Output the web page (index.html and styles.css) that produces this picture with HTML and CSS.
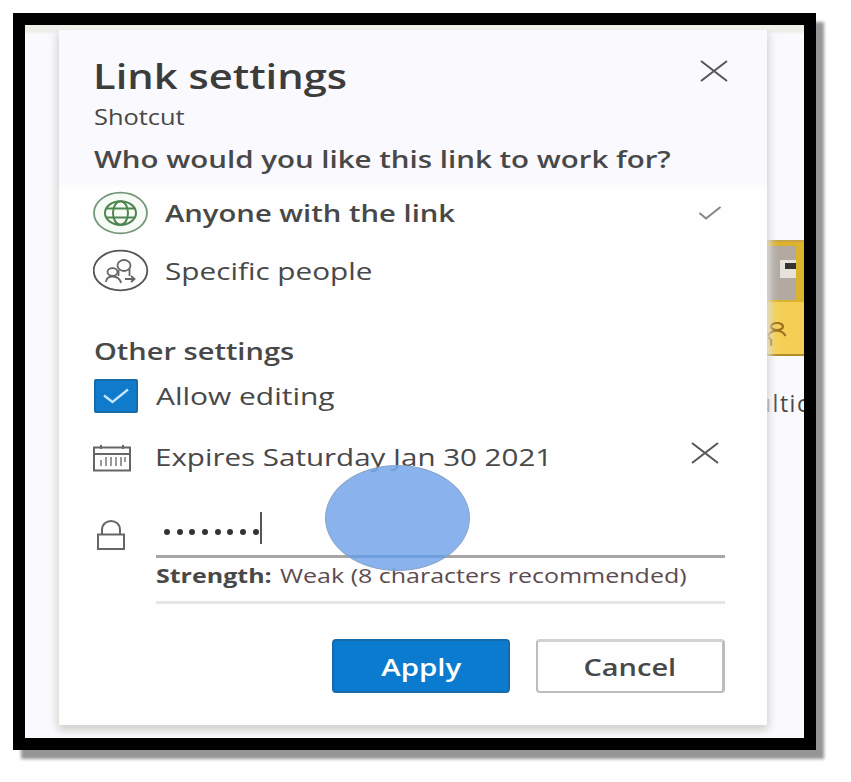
FILE: index.html
```html
<!DOCTYPE html>
<html lang="en">
<head>
<meta charset="utf-8">
<title>Link settings</title>
<link rel="stylesheet" href="styles.css">
</head>
<body>
<main class="frame">
  <aside class="backdrop">
    <div class="tile">
      <div class="tile-photo"><i></i></div>
      <svg class="tile-person" width="20" height="28" viewBox="0 0 20 28" fill="none" stroke="#9b6f1b" stroke-width="2.2"><ellipse cx="10" cy="4.500" rx="6" ry="3.500"/><path d="M1 14C4 7 15 7 18.500 14M1 15l3 3v6"/></svg>
    </div>
    <span class="tile-name">ultic</span>
  </aside>
  <section class="dialog">
    <header class="row title-row">
      <h1 class="t title">Link settings</h1>
      <svg class="close" width="30" height="24" viewBox="0 0 30 24"><path d="M2 2L28 22M28 2L2 22"/></svg>
    </header>
    <div class="row sub-row"><span class="t sub">Shotcut</span></div>
    <div class="row who-row"><span class="t who">Who would you like this link to work for?</span></div>
    <div class="row option">
      <svg class="round" width="56" height="44" viewBox="0 0 56 44" fill="none"><ellipse cx="27.500" cy="22" rx="26.500" ry="20.300" stroke="#74967a" stroke-width="1.800" fill="#f6fcf5"/><g stroke="#4f8550" stroke-width="2"><ellipse cx="27.500" cy="22" rx="15.500" ry="11.800"/><ellipse cx="27.500" cy="22" rx="7.500" ry="11.800"/><path d="M13.500 17.500H41.500M13.500 26.500H41.500"/></g></svg>
      <span class="t anyone">Anyone with the link</span>
      <svg class="tick" width="24" height="16" viewBox="0 0 24 16" fill="none" stroke="#858585" stroke-width="2"><path d="M1.500 8L8 13.500L22.500 2"/></svg>
    </div>
    <div class="row option">
      <svg class="round" width="56" height="44" viewBox="0 0 56 44" fill="none" stroke="#555"><ellipse cx="27.500" cy="21.500" rx="26.800" ry="19.800" stroke-width="1.800"/><g stroke-width="1.800" stroke="#666"><ellipse cx="19.500" cy="23" rx="5" ry="3.800"/><path d="M13 33C13 25.500 26 25.500 28 34"/><ellipse cx="31" cy="16.500" rx="6.500" ry="5.500"/><path d="M25.500 27V21M36.500 20V27M32 30h9.500M38 27l3.500 3-3.500 3"/></g></svg>
      <span class="t specific">Specific people</span>
    </div>
    <div class="row other-row"><span class="t other">Other settings</span></div>
    <div class="row allow-row">
      <span class="box"><svg width="28" height="18" viewBox="0 0 28 18" fill="none" stroke="#c4e5fa" stroke-width="2.300"><path d="M2 8.500L10.500 15L26 2.500"/></svg></span>
      <span class="t allow">Allow editing</span>
    </div>
    <div class="row expire-row">
      <svg class="cal" width="38" height="27" viewBox="0 0 38 27" fill="none" stroke="#666" stroke-width="2"><path d="M1 2.500H37V25.500H1ZM1 9H37M8 0V4M30 0V4"/><path stroke="#999" stroke-width="2" d="M8 15V21M13 12V21M18 12V21M23 12V21M28 12V21M32 12V17"/></svg>
      <span class="t expires">Expires Saturday Jan 30 2021</span>
      <svg class="close second" width="30" height="24" viewBox="0 0 30 24"><path d="M2 2L28 22M28 2L2 22"/></svg>
    </div>
    <div class="row password-row">
      <svg class="lock" width="30" height="31" viewBox="0 0 30 31" fill="none" stroke="#666" stroke-width="2"><path d="M2 14.500H28V29H2ZM6 14.500V10C6 -2 24 -2 24 10V14.500"/></svg>
      <div class="field">
        <span class="dots"><i></i><i></i><i></i><i></i><i></i><i></i><i></i><i></i></span><span class="caret"></span>
      </div>
    </div>
    <div class="helper"><span class="t strong">Strength:</span><span class="t weak">Weak (8 characters recommended)</span></div>
    <footer class="actions">
      <button class="primary"><span class="t apply">Apply</span></button>
      <button class="secondary"><span class="t cancel">Cancel</span></button>
    </footer>
    <div class="spot"></div>
  </section>
</main>
</body>
</html>
```
FILE: styles.css
```css
* { box-sizing: border-box; }
body {
  margin: 0;
  height: 782px;
  overflow: hidden;
  padding: 12.500px 13px;
  background: #fff;
  font-family: "Open Sans", sans-serif;
  color: #484848;
}
.frame {
  position: relative;
  width: 803px;
  height: 737px;
  padding: 5px 0 0 34px;
  border: 12px solid #000;
  background: linear-gradient(#eeefe8 0 7px, #faf9fd 9px);
  box-shadow: 8px 9px 3px #969696;
}

/* Page content showing beside the dialog */
.backdrop {
  position: absolute;
  top: 215px;
  right: 0;
  width: 40px;
  overflow: hidden;
}
.tile {
  height: 116px;
  padding: 4px 8px 0 3px;
  background: linear-gradient(to right, transparent 3px, #dcb32c 3px) top / 100% 60px no-repeat, #f3d055;
  border-top: 2px solid #c9a545;
  border-bottom: 2px solid #b38b28;
}
.tile-photo {
  display: flex;
  align-items: center;
  justify-content: flex-end;
  height: 54px;
  margin-bottom: 22px;
  background: #b2aaa0;
}
.tile-photo i {
  width: 16px;
  height: 18px;
  margin-top: -8px;
  border: solid #e8e3da;
  border-width: 3px 0 9px 5px;
  background: #333;
}
.tile-person { display: block; }
.tile-name {
  display: block;
  margin: 32px 0 0 -7px;
  font-size: 23px;
  line-height: 30px;
  letter-spacing: 1.500px;
}

.dialog {
  position: relative;
  width: 708px;
  height: 695px;
  padding: 24px 0 0 35px;
  background: linear-gradient(#faf9fe 0 154px, #fefefe 158px);
  box-shadow: 0 5px 8px #d2d2ce, 0 0 9px 2px #e6e6e6;
  clip-path: inset(0 -24px -12px -24px);
}
.row { display: flex; align-items: center; }

/* Wide-set lettering: each label is stretched from its left edge */
.t {
  display: inline-block;
  flex: none;
  margin: 0;
  white-space: nowrap;
  font-size: 23px;
  line-height: 30px;
  transform-origin: left;
  transform: scaleX(1.28);
}
.title { margin: 4px 0 0 -1px; font-size: 34px; font-weight: 600; line-height: 40px; transform: scaleX(1.225); color: #3c3c3c; }
.sub { font-size: 22px; transform: scaleX(1.155); }
.who, .anyone, .other, .apply, .cancel { font-weight: 600; }
.who { transform: scaleX(1.281); }
.anyone { transform: scaleX(1.27); }
.specific { transform: scaleX(1.292); }
.other { transform: scaleX(1.262); }
.allow { transform: scaleX(1.302); }
.expires { transform: scaleX(1.284); }

.close { flex: none; margin: -6px 38px 0 auto; fill: none; stroke: #555; stroke-width: 2; }
.close.second { margin: -8px 47px 0 auto; }
.tick { margin: 0 45px 0 auto; }
.round { flex: none; margin-left: -1px; }
.option .t { margin-left: 16px; }

.title-row { height: 40px; }
.sub-row { height: 44px; }
.who-row { height: 42px; margin-bottom: 4px; }
.option { height: 58px; }
.other-row { height: 40px; margin-top: 31px; }
.allow-row { height: 50px; }
.box {
  display: flex;
  align-items: center;
  justify-content: center;
  width: 44px;
  height: 34px;
  border: 2px solid #176ba8;
  border-radius: 2px;
  background: #107bcb;
}
.allow { margin-left: 18px; }
.expire-row { height: 60px; margin-top: 6px; }
.cal { margin-top: 4px; margin-left: -1px; }
.expires { margin-left: 24px; }
.password-row { height: 71px; }
.lock { margin: 27px 0 0 2px; }
.field {
  display: flex;
  align-items: center;
  width: 569px;
  height: 71px;
  margin-left: 30px;
  padding: 15px 0 0 8px;
  border-bottom: 3px solid #a6a6a6;
}
.dots { display: flex; gap: 6.700px; margin-top: 7px; }
.dots i { width: 6px; height: 6px; border-radius: 50%; background: #333; }
.caret { width: 2px; height: 32px; margin-left: 1px; background: #555; }
.helper {
  display: flex;
  width: 569px;
  height: 46px;
  margin-left: 62px;
  padding-top: 3px;
  border-bottom: 3px solid #e6e6e4;
}
.strong, .weak { font-size: 20px; transform: scaleX(1.25); }
.strong { font-weight: 700; }
.weak { margin-left: 31px; color: #5d4b4e; }

.actions { display: flex; gap: 26px; margin: 35px 0 0 238px; }
button {
  display: flex;
  align-items: center;
  justify-content: center;
  height: 54px;
  padding: 2px 0 0;
  font: inherit;
  border-radius: 4px;
}
button .t { transform-origin: center; transform: scaleX(1.28); }
button .cancel { transform: scaleX(1.26); }
.primary { width: 178px; border: 2px solid #176ba8; background: #0b7bd0; color: #fff; }
.secondary { width: 189px; border: 2px solid #bcbcbc; border-top: 3px solid #d2d2d2; border-right-width: 3px; background: #fefefe; color: #484848; }

.spot {
  position: absolute;
  left: 266px;
  top: 435px;
  width: 145px;
  height: 106px;
  border: 1px solid #86a3cb;
  border-radius: 50%;
  background: linear-gradient(rgba(122, 168, 234, .88) 89px, #6f9fdc 89px 92px, rgba(122, 168, 234, .88) 92px);
}
```
